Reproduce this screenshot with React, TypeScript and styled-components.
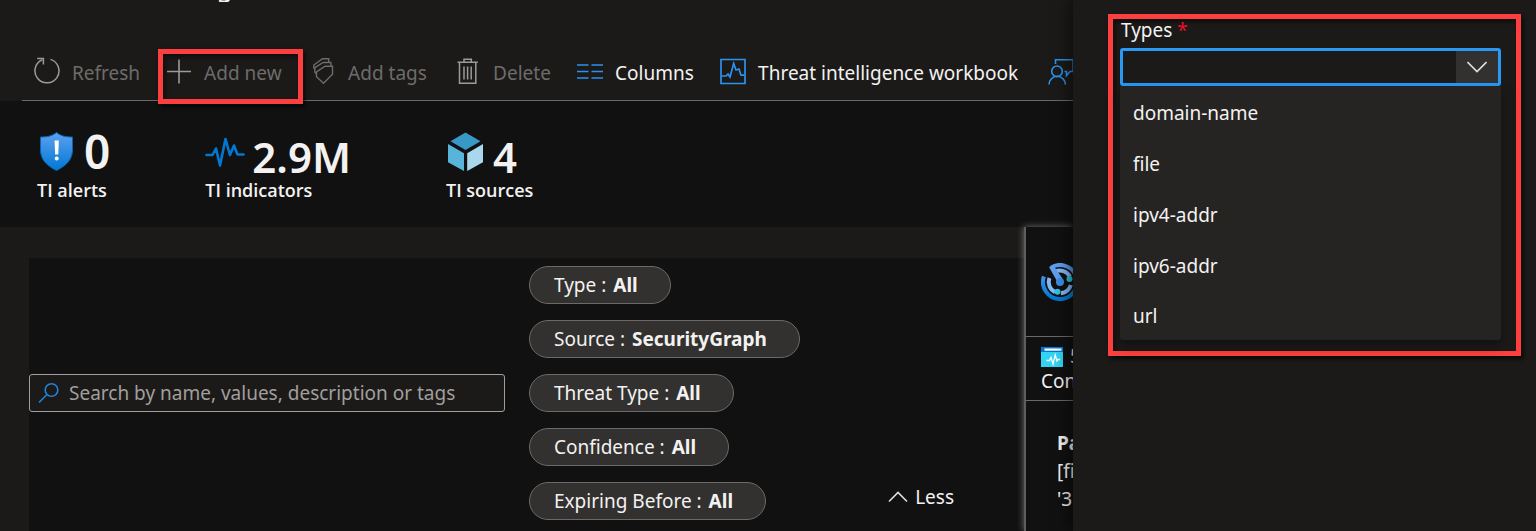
import React from "react";
import styled, { createGlobalStyle, css } from "styled-components";

const GlobalStyle = createGlobalStyle`
  *, *::before, *::after { box-sizing: border-box; }
  body {
    margin: 0;
    background: #1b1a19;
    color: #f3f2f1;
    font-family: "Noto Sans", "Open Sans", sans-serif;
    font-size: 19px;
    line-height: 28px;
  }
  button, input, select { font: inherit; color: inherit; }
`;

const Page = styled.div`
  display: flex;
  min-height: 100vh;
  overflow: hidden;
`;

const Main = styled.main`
  flex: 1;
  min-width: 0;
  display: flex;
  flex-direction: column;
  overflow: hidden;
`;

const TitleBar = styled.header`
  display: flex;
  align-items: flex-end;
  height: 2px;
  padding-left: 217px;
  overflow: hidden;
`;

const Title = styled.h1`
  margin: 0;
  font-size: 24px;
  line-height: 28px;
  font-weight: 600;
`;

const Toolbar = styled.nav`
  display: flex;
  align-items: flex-end;
  gap: 26px;
  height: 99px;
  margin-left: 22px;
  padding: 0 0 12px 12px;
  border-bottom: 1px solid #6b6a69;
`;

const highlight = css`
  border: 5px solid #fd3f3f;
  box-shadow: 2px 3px 4px rgba(0, 0, 0, 0.7), inset 2px 3px 4px rgba(0, 0, 0, 0.5);
`;

const ToolButton = styled.button<{ $muted?: boolean; $marked?: boolean; $width: number }>`
  position: relative;
  flex: 0 0 ${(p) => p.$width}px;
  display: flex;
  align-items: center;
  gap: 12px;
  padding: 0;
  border: 0;
  background: none;
  white-space: nowrap;
  color: ${(p) => (p.$muted ? "#6d6c6a" : "#f3f2f1")};

  svg { flex: none; color: ${(p) => (p.$muted ? "#9b9a98" : "#2a93ef")}; }

  ${(p) =>
    p.$marked &&
    css`
      &::after {
        content: "";
        position: absolute;
        inset: -7px -19px -16px -8px;
        z-index: 1;
        ${highlight}
      }
    `}
`;

const ToolLabel = styled.span`
  padding-top: 2px;
`;

const Stats = styled.section`
  display: flex;
  align-items: flex-end;
  gap: 95px;
  height: 126px;
  padding: 0 0 25px 37px;
  background: #111111;
`;

const Stat = styled.div`
  display: flex;
  flex-direction: column;
`;

const StatTop = styled.div`
  display: flex;
  align-items: flex-start;
  gap: 7px;
  height: 46px;
`;

const StatValue = styled.span<{ $large?: boolean }>`
  font-size: ${(p) => (p.$large ? 46 : 42)}px;
  line-height: ${(p) => (p.$large ? 38 : 50)}px;
  font-weight: 600;
`;

const StatLabel = styled.span`
  font-family: "Open Sans", "Noto Sans", sans-serif;
  font-size: 18px;
  line-height: 24px;
  font-weight: 600;
`;

const Content = styled.div`
  flex: 1;
  display: flex;
`;

const ListColumn = styled.section`
  flex: 1;
  min-width: 0;
  display: flex;
  padding: 31px 0 0 29px;
`;

const FilterCard = styled.div`
  flex: 1;
  display: flex;
  align-items: flex-start;
  gap: 24px;
  padding: 8px 70px 11px 0;
  background: #111111;
`;

const FilterBody = styled.div`
  flex: 1;
  display: flex;
  align-items: center;
  gap: 24px;
`;

const SearchBox = styled.label`
  flex: 0 0 476px;
  display: flex;
  align-items: center;
  gap: 9px;
  height: 38px;
  padding: 0 8px;
  border: 1px solid #a19f9d;
  border-radius: 3px;
  background: #1b1a19;
`;

const SearchInput = styled.input`
  flex: 1;
  min-width: 0;
  padding: 0;
  border: 0;
  outline: 0;
  background: none;
  &::placeholder { color: #a19f9d; opacity: 1; }
`;

const Pills = styled.div`
  display: flex;
  flex-direction: column;
  align-items: flex-start;
  gap: 16px;
`;

const Pill = styled.button`
  height: 38px;
  padding: 0 32px 0 24px;
  border: 1px solid #6b6a69;
  border-radius: 19px;
  background: #323130;
  white-space: nowrap;

  strong { margin-left: 2px; }
`;

const LessButton = styled.button`
  display: flex;
  align-items: center;
  align-self: flex-end;
  gap: 7px;
  margin-left: auto;
  padding: 0 0 9px;
  border: 0;
  background: none;
`;

const Details = styled.section`
  flex: 0 0 49px;
  min-width: 0;
  border-left: 2px solid #605e5c;
  background: #111111;
  box-shadow: 0 0 7px rgba(255, 255, 255, 0.4);
  white-space: nowrap;
`;

const DetailsHead = styled.div`
  display: flex;
  align-items: center;
  height: 110px;
  padding-left: 15px;
  border-bottom: 1px solid #6b6a69;

  svg { flex: none; }
`;

const DetailsInfo = styled.div`
  height: 64px;
  padding: 7px 0 0 15px;
  border-bottom: 1px solid #6b6a69;
  line-height: 25px;
`;

const InfoRow = styled.div`
  display: flex;
  align-items: center;
  gap: 7px;

  svg { flex: none; }
`;

const DetailsText = styled.p`
  margin: 0;
  padding: 28px 0 0 31px;
`;

const SidePanel = styled.aside`
  position: relative;
  flex: 0 0 463px;
  padding: 14px 15px 0 35px;
  background: #1b1a19;
  box-shadow: -2px 0 16px rgba(0, 0, 0, 0.6);
`;

const Callout = styled.div`
  padding: 0 15px 11px 7px;
  ${highlight}
`;

const FieldLabel = styled.label`
  display: block;
  height: 29px;
  padding-left: 1px;
  line-height: 22px;
`;

const Required = styled.span`
  color: #e81123;
`;

const SelectBox = styled.div`
  display: grid;
  grid-template-columns: 1fr 42px;
  height: 38px;
  border: 3px solid #2899f5;
  border-radius: 3px;
`;

const TypeSelect = styled.select`
  grid-area: 1 / 1 / 2 / 3;
  appearance: none;
  padding: 0 12px;
  border: 0;
  outline: 0;
  background: #1b1a19;
`;

const SelectArrow = styled.span`
  grid-area: 1 / 2 / 2 / 3;
  display: grid;
  place-items: center;
  background: #323130;
  pointer-events: none;
`;

const Options = styled.ul`
  margin: 0;
  padding: 1px 0 0;
  list-style: none;
  border-radius: 0 0 3px 3px;
  background: #252423;
  box-shadow: 0 6px 12px rgba(0, 0, 0, 0.35);
`;

const Option = styled.li`
  display: flex;
  align-items: center;
  height: 51px;
  padding-left: 13px;
  &:last-child { height: 49px; }
`;

const Line = (p: { children: React.ReactNode; stroke?: number; color?: string }) => (
  <svg width="26" height="32" viewBox="0 0 26 32" fill="none" stroke={p.color ?? "currentColor"} strokeWidth={p.stroke ?? 1.5} aria-hidden="true">
    {p.children}
  </svg>
);

const RefreshIcon = () => (
  <Line>
    <path d="M16.5 3.4A12 12 0 1 1 8.3 3.8" />
    <path d="M3.2 2.6H9.4V8.4" />
  </Line>
);

const PlusIcon = () => (
  <Line stroke={1.6}>
    <path d="M1 15.5H25M13 3.5V27.5" />
  </Line>
);

const TagsIcon = () => (
  <Line stroke={1.4} color="#6d6c6a">
    <path d="M13.5 27.2L6.5 20.7V15.8L15 10.2H22.5V18.2Z" />
    <path d="M6.5 18L4.8 16.2V11.6L13.2 6.5H20.9V10" />
    <path d="M5 13.2L3.8 11.7V9L12.5 2.8H18.7V6.3" />
  </Line>
);

const TrashIcon = () => (
  <Line>
    <path d="M2.5 6.2H22.8M9 6V3.2H16.3V6M4.5 6.5V27.2H20.8V6.5" />
    <path d="M9 10.5V23.5M12.6 10.5V23.5M16.2 10.5V23.5" />
  </Line>
);

const ColumnsIcon = () => (
  <Line stroke={1.7}>
    <path d="M0 9H11.5M14.5 9H26M0 15.5H11.5M14.5 15.5H26M0 22H11.5M14.5 22H26" />
  </Line>
);

const WorkbookIcon = () => (
  <Line stroke={1.7}>
    <path d="M1 3.5H25V27.500H1Z" />
    <path d="M1.5 20H6L8 18L10 21L13.7 7.5L16 14L19 13L21 19.2H24.5" />
  </Line>
);

const FeedbackIcon = () => (
  <Line stroke={1.6}>
    <circle cx="9" cy="15.3" r="5.3" />
    <path d="M1 28.5A8.2 8.2 0 0 1 17.4 28.5" />
    <path d="M7.5 8V3.8H25.2V15.5H22L18.5 19.5V15.5H16.5" />
  </Line>
);

const ShieldIcon = () => (
  <svg width="40" height="40" viewBox="0 0 40 40" aria-hidden="true">
    <defs>
      <linearGradient id="shield" x1="0" y1="0" x2="0" y2="1">
        <stop offset="0" stopColor="#5ea0ef" />
        <stop offset="1" stopColor="#0078d4" />
      </linearGradient>
    </defs>
    <path d="M19.5 0.5C15 4.2 10 5 3.5 5V18C3.5 28 10.5 34 19.5 38.5C28.5 34 35.5 28 35.5 18V5C29 5 24 4.2 19.5 0.5Z" fill="url(#shield)" stroke="#0067b8" />
    <path d="M17.6 8.5H21.8L21.3 22.5H18.1Z" fill="#fff" />
    <circle cx="19.7" cy="26.5" r="2" fill="#fff" />
  </svg>
);

const PulseIcon = () => (
  <svg width="40" height="40" viewBox="0 0 40 40" fill="none" stroke="#0078d4" strokeWidth="2.6" strokeLinejoin="round" strokeLinecap="round" aria-hidden="true">
    <path d="M1.5 23H7.5L11 16.5L15 33.5L20.5 7L25 23L29 13.5L32.5 22.5H38.5" />
  </svg>
);

const CubeIcon = () => (
  <svg width="40" height="40" viewBox="0 0 40 40" aria-hidden="true">
    <path d="M19.5 0.5L34.5 9.2L19.5 18L4.5 9.2Z" fill="#3999c6" />
    <path d="M2 12L18 21.2V39L2 30.2Z" fill="#59b4d9" />
    <path d="M37 12L21.2 21.2V39L37 30.2Z" fill="#a9d8ec" />
  </svg>
);

const SearchIcon = () => (
  <svg width="22" height="22" viewBox="0 0 22 22" fill="none" stroke="#1f85dc" strokeWidth="1.6" aria-hidden="true">
    <circle cx="13.5" cy="8" r="6.3" />
    <path d="M9 12.5L1 20.5" />
  </svg>
);

const ChevronIcon = ({ up }: { up?: boolean }) => (
  <svg width="20" height="12" viewBox="0 0 20 12" fill="none" stroke="#e1dfdd" strokeWidth="1.6" aria-hidden="true">
    <path d={up ? "M1 10.5L10 1.5L19 10.5" : "M0.5 1L10 10.5L19.5 1"} />
  </svg>
);

const RadarIcon = () => (
  <svg width="38" height="38" viewBox="0 0 38 38" fill="none" aria-hidden="true">
    <defs>
      <linearGradient id="radar" x1="0" y1="0" x2="0" y2="1">
        <stop offset="0" stopColor="#5ea0ef" />
        <stop offset="1" stopColor="#0078d4" />
      </linearGradient>
    </defs>
    <path d="M2.9 13.5A17 17 0 1 0 10 4.6" stroke="url(#radar)" strokeWidth="4" />
    <path d="M8.4 15A11.3 11.3 0 0 0 14 29.1" stroke="#83b9f9" strokeWidth="4" />
    <path d="M20 30.2A11.3 11.3 0 0 0 29.8 22M29 13.7A11.3 11.3 0 0 0 14 8.8" stroke="#83b9f9" strokeWidth="4" />
    <path d="M8 4L12.5 2.5L21.5 15.5L17 20Z" fill="#5ea0ef" />
    <circle cx="19" cy="19" r="4" fill="#3c8ee6" />
    <circle cx="28.5" cy="16" r="3" fill="#2fc5dc" />
    <circle cx="16.5" cy="28.8" r="3" fill="#2fc5dc" />
  </svg>
);

const MonitorIcon = () => (
  <svg width="22" height="20" viewBox="0 0 22 20" aria-hidden="true">
    <path d="M0 4.5H22V20H0Z" fill="#32d4f5" />
    <path d="M0 0H22V5H0Z" fill="#0078d4" />
    <path d="M3.5 1.5H20.5V3.7H3.5Z" fill="#fff" />
    <path d="M5.5 13.5H8.5L10 10.5L12 17L14.2 8L16 14L17 12.5H19" fill="none" stroke="#fff" strokeWidth="1.3" />
  </svg>
);

const tools = [
  { label: "Refresh", icon: <RefreshIcon />, muted: true, width: 104 },
  { label: "Add new", icon: <PlusIcon />, muted: true, width: 118, marked: true },
  { label: "Add tags", icon: <TagsIcon />, muted: true, width: 119 },
  { label: "Delete", icon: <TrashIcon />, muted: true, width: 96 },
  { label: "Columns", icon: <ColumnsIcon />, width: 117 },
  { label: "Threat intelligence workbook", icon: <WorkbookIcon />, width: 302 },
];

const filters = [
  ["Type", "All"],
  ["Source", "SecurityGraph"],
  ["Threat Type", "All"],
  ["Confidence", "All"],
  ["Expiring Before", "All"],
];

const types = ["domain-name", "file", "ipv4-addr", "ipv6-addr", "url"];

export default function App() {
  return (
    <Page>
      <GlobalStyle />
      <Main>
        <TitleBar>
          <Title>g</Title>
        </TitleBar>
        <Toolbar aria-label="Commands">
          {tools.map((t) => (
            <ToolButton key={t.label} type="button" $muted={t.muted} $marked={t.marked} $width={t.width}>
              {t.icon}
              <ToolLabel>{t.label}</ToolLabel>
            </ToolButton>
          ))}
          <ToolButton type="button" aria-label="Feedback" $width={26}>
            <FeedbackIcon />
          </ToolButton>
        </Toolbar>
        <Stats>
          <Stat>
            <StatTop>
              <ShieldIcon />
              <StatValue $large>0</StatValue>
            </StatTop>
            <StatLabel>TI alerts</StatLabel>
          </Stat>
          <Stat>
            <StatTop>
              <PulseIcon />
              <StatValue>2.9M</StatValue>
            </StatTop>
            <StatLabel>TI indicators</StatLabel>
          </Stat>
          <Stat>
            <StatTop>
              <CubeIcon />
              <StatValue>4</StatValue>
            </StatTop>
            <StatLabel>TI sources</StatLabel>
          </Stat>
        </Stats>
        <Content>
          <ListColumn>
            <FilterCard>
              <FilterBody>
                <SearchBox>
                  <SearchIcon />
                  <SearchInput type="text" aria-label="Search" placeholder="Search by name, values, description or tags" />
                </SearchBox>
                <Pills>
                  {filters.map(([name, value]) => (
                    <Pill key={name} type="button">
                      {name} : <strong>{value}</strong>
                    </Pill>
                  ))}
                </Pills>
                <LessButton type="button">
                  <ChevronIcon up />
                  Less
                </LessButton>
              </FilterBody>
            </FilterCard>
          </ListColumn>
          <Details>
            <DetailsHead>
              <RadarIcon />
            </DetailsHead>
            <DetailsInfo>
              <InfoRow>
                <MonitorIcon />5
              </InfoRow>
              Con
            </DetailsInfo>
            <DetailsText>
              <strong>Pa</strong>
              <br />
              [fi
              <br />
              '3
            </DetailsText>
          </Details>
        </Content>
      </Main>
      <SidePanel>
        <Callout>
          <FieldLabel htmlFor="types">
            Types <Required>*</Required>
          </FieldLabel>
          <SelectBox>
            <TypeSelect id="types" defaultValue="">
              <option value="" aria-label="None" />
              {types.map((t) => (
                <option key={t}>{t}</option>
              ))}
            </TypeSelect>
            <SelectArrow>
              <ChevronIcon />
            </SelectArrow>
          </SelectBox>
          <Options role="listbox" aria-label="Types">
            {types.map((t) => (
              <Option key={t} role="option" aria-selected={false}>
                {t}
              </Option>
            ))}
          </Options>
        </Callout>
      </SidePanel>
    </Page>
  );
}
